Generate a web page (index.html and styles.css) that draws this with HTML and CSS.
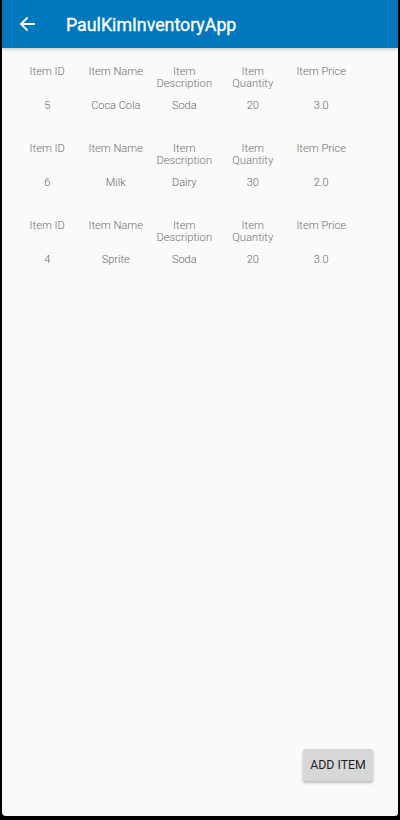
FILE: index.html
```html
<!DOCTYPE html>
<html>
<head>
<meta charset="utf-8">
<link rel="stylesheet" href="styles.css">
</head>
<body>
<div class="screen">
  <header class="toolbar">
    <span class="back">
      <svg width="16" height="16" viewBox="0 0 16 16"><path d="M15 8H2M8 2L2 8l6 6" fill="none" stroke="#fff" stroke-width="1.8" stroke-linecap="square"/></svg>
    </span>
    <span class="title">PaulKimInventoryApp</span>
  </header>
  <main class="list">
    <section class="item">
      <div class="row head"><span>Item ID</span><span>Item Name</span><span>Item Description</span><span>Item Quantity</span><span>Item Price</span></div>
      <div class="row data"><span>5</span><span>Coca Cola</span><span>Soda</span><span>20</span><span>3.0</span></div>
    </section>
    <section class="item">
      <div class="row head"><span>Item ID</span><span>Item Name</span><span>Item Description</span><span>Item Quantity</span><span>Item Price</span></div>
      <div class="row data"><span>6</span><span>Milk</span><span>Dairy</span><span>30</span><span>2.0</span></div>
    </section>
    <section class="item">
      <div class="row head"><span>Item ID</span><span>Item Name</span><span>Item Description</span><span>Item Quantity</span><span>Item Price</span></div>
      <div class="row data"><span>4</span><span>Sprite</span><span>Soda</span><span>20</span><span>3.0</span></div>
    </section>
  </main>
  <div class="actions">
    <button class="add">ADD ITEM</button>
  </div>
</div>
</body>
</html>
```
FILE: styles.css
```css
html, body {
  margin: 0;
  padding: 0;
  background: #000;
}
body {
  width: 400px;
  height: 820px;
  overflow: hidden;
  font-family: Roboto, "Liberation Sans", sans-serif;
}
.screen {
  margin: 0 2px;
  width: 396px;
  height: 816px;
  background: #fafafa;
  border-bottom-left-radius: 4px;
  border-bottom-right-radius: 3px;
  display: flex;
  flex-direction: column;
}
.toolbar {
  height: 48px;
  background: #0277bd;
  display: flex;
  align-items: center;
  box-shadow: 0 1px 4px rgba(0,0,0,0.25);
  position: relative;
  z-index: 1;
}
.back {
  width: 16px;
  height: 16px;
  margin-left: 17px;
  display: flex;
}
.title {
  margin-left: 31px;
  color: #fff;
  font-size: 17.8px;
  font-weight: 400;
  -webkit-text-stroke: 0.35px #fff;
  padding-top: 1px;
}
.list {
  flex: 1;
  padding-top: 18px;
  padding-left: 11px;
}
.item {
  margin-bottom: 30px;
}
.row {
  display: grid;
  grid-template-columns: repeat(5, 68.5px);
  text-align: center;
}
.head {
  color: #707070;
  font-size: 11.2px;
  font-weight: 300;
  line-height: 12.3px;
  height: 24px;
}
.head span {
  padding: 0 2px;
}
.data {
  margin-top: 9px;
  color: #666;
  font-size: 11px;
  font-weight: 300;
  line-height: 14px;
}
.actions {
  display: flex;
  justify-content: flex-end;
  padding: 0 25px 35px 0;
}
.add {
  width: 70px;
  height: 32px;
  border: none;
  border-radius: 2px;
  background: #d6d7d7;
  color: #1f1f1f;
  font-family: Roboto, "Liberation Sans", sans-serif;
  font-size: 12.3px;
  font-weight: 400;
  padding: 0;
  box-shadow: 0 2px 3px rgba(0,0,0,0.25);
}
```
